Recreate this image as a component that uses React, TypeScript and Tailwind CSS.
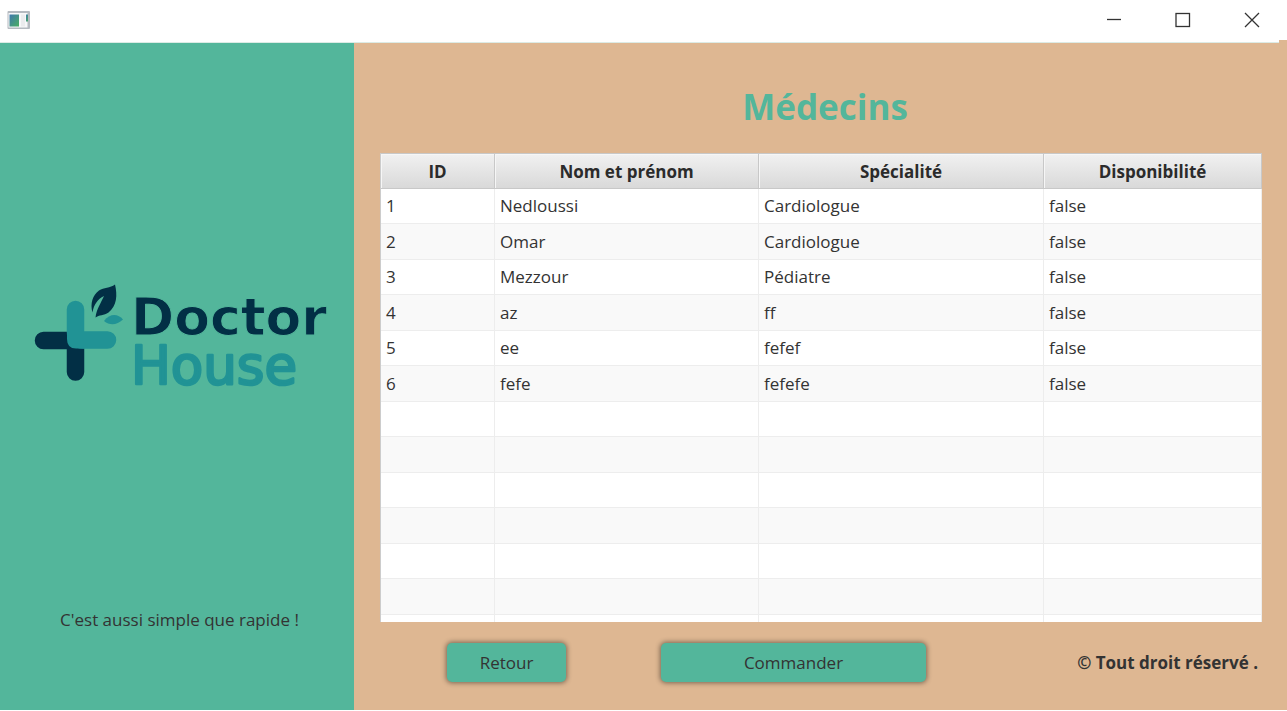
type Doctor = { id: number; name: string; specialty: string; available: boolean };

const doctors: Doctor[] = [
  { id: 1, name: "Nedloussi", specialty: "Cardiologue", available: false },
  { id: 2, name: "Omar", specialty: "Cardiologue", available: false },
  { id: 3, name: "Mezzour", specialty: "Pédiatre", available: false },
  { id: 4, name: "az", specialty: "ff", available: false },
  { id: 5, name: "ee", specialty: "fefef", available: false },
  { id: 6, name: "fefe", specialty: "fefefe", available: false },
];

const ROW_COUNT = 13;
const columns = ["ID", "Nom et prénom", "Spécialité", "Disponibilité"];

function TitleBar() {
  return (
    <header className="relative flex h-[43px] shrink-0 items-center justify-between border-b border-[#dcebe5] bg-white pb-[2px] pl-[7px]">
      <svg width="24" height="20" viewBox="0 0 24 20" aria-hidden="true">
        <defs>
          <linearGradient id="app" x1="0" y1="0" x2="1" y2="1">
            <stop offset="0" stopColor="#3f78ad" />
            <stop offset="1" stopColor="#4aae62" />
          </linearGradient>
        </defs>
        <rect x="0.5" y="1" width="22.5" height="18" rx="1" fill="#b5bac0" />
        <rect x="1.5" y="3" width="19" height="14.5" fill="#f7f8f9" />
        <rect x="2.5" y="4.5" width="9.5" height="12" fill="url(#app)" />
        <rect x="14" y="4.5" width="4" height="12" fill="#ebecee" />
        <rect x="19" y="4.5" width="2" height="7" fill="url(#app)" />
      </svg>
      <div className="flex h-full text-[#333333]">
        <button type="button" aria-label="Réduire" className="flex w-[69px] items-center justify-center">
          <svg width="16" height="16" viewBox="0 0 16 16" fill="none" stroke="currentColor" strokeWidth="1.3">
            <path d="M1 7.5h14" />
          </svg>
        </button>
        <button type="button" aria-label="Agrandir" className="flex w-[69px] items-center justify-center">
          <svg width="16" height="16" viewBox="0 0 16 16" fill="none" stroke="currentColor" strokeWidth="1.3">
            <rect x="1" y="1.5" width="13.5" height="13" />
          </svg>
        </button>
        <button type="button" aria-label="Fermer" className="flex w-[70px] items-center justify-center">
          <svg width="16" height="16" viewBox="0 0 16 16" fill="none" stroke="currentColor" strokeWidth="1.3">
            <path d="M1 1l14 14M15 1L1 15" />
          </svg>
        </button>
      </div>
      <span className="absolute right-0 -bottom-px h-[3px] w-2 bg-[#deb792]" />
    </header>
  );
}

function Logo() {
  return (
    <svg viewBox="0 0 320 130" className="w-[320px]" role="img" aria-label="Doctor House">
      <path d="M23.5 70.5H55M55.5 70V102" stroke="#022f45" strokeWidth="17.5" strokeLinecap="round" fill="none" />
      <path d="M55.5 39.5V62Q55.5 70 63 70H87.5" stroke="#219395" strokeWidth="17.5" strokeLinecap="round" strokeLinejoin="round" fill="none" />
      <path d="M47 60H64V78.5H56Q47 78.5 47 69Z" fill="#219395" />
      <path d="M95 14.5C97.5 25 97 36 88.5 42.5C84 45.5 79 45 75.5 47.5C76.5 39 81 33 84 26C77.5 29.5 74 34 72.5 42.5C70 34 72.5 25 79 20.5C84 17.5 90 18 95 14.5Z" fill="#022f45" />
      <path d="M84 51C90 43 98 43.5 103 49.5C97 55 90 56 84 51Z" fill="#219395" />
      <text className="font-['DejaVu_Sans']" strokeLinejoin="round">
        <tspan x="111" y="65" fontSize="52" fontWeight="700" fill="#022f45" stroke="#53b69b" strokeWidth="1">Doctor</tspan>
        <tspan x="111" y="114" fontSize="53" fill="#219395" stroke="#219395" strokeWidth="2.5">House</tspan>
      </text>
    </svg>
  );
}

function Sidebar() {
  return (
    <aside className="flex w-[354px] shrink-0 flex-col items-center justify-between bg-[#53b69b] pt-[227px] pb-[76px] pl-[5px]">
      <Logo />
      <p className="text-[17px] leading-7 text-[#333333]">C'est aussi simple que rapide !</p>
    </aside>
  );
}

function DoctorTable() {
  return (
    <div className="h-[469px] overflow-hidden border-l border-[#cccccc] bg-white">
      <table className="w-full table-fixed border-separate border-spacing-0 text-left">
        <colgroup>
          <col className="w-[114px]" />
          <col className="w-[264px]" />
          <col className="w-[285px]" />
          <col />
        </colgroup>
        <thead>
          <tr className="h-[36px]">
            {columns.map((title) => (
              <th
                key={title}
                scope="col"
                className="border-t border-r border-b border-[#c8c8c8] bg-linear-to-b from-[#f1f1f1] to-[#d9d9d9] p-0 pt-[2px] text-center text-[17px] leading-6 font-bold text-[#2b2b2b] shadow-[inset_1px_1px_0_#f6f6f6]"
              >
                {title}
              </th>
            ))}
          </tr>
        </thead>
        <tbody>
          {Array.from({ length: ROW_COUNT }, (_, i) => {
            const d = doctors[i];
            const cells = d ? [d.id, d.name, d.specialty, String(d.available)] : ["", "", "", ""];
            return (
              <tr key={i} className="odd:h-[35px] even:h-[36px] odd:bg-white even:bg-[#f9f9f9]">
                {cells.map((value, c) => (
                  <td
                    key={c}
                    className="border-r border-b border-[#ededed] p-0 pl-[5px] text-[17px] leading-6 text-[#333333]"
                  >
                    {value}
                  </td>
                ))}
              </tr>
            );
          })}
        </tbody>
      </table>
    </div>
  );
}

const buttonStyle =
  "h-[39px] rounded-[5px] bg-[#53b69b] text-[17px] leading-6 text-[#333333] shadow-[0_0_5px_1px_rgba(0,0,0,0.45)]";

export default function App() {
  return (
    <div className="flex min-h-screen flex-col bg-white font-['Open_Sans','Noto_Sans',sans-serif]">
      <TitleBar />
      <div className="mb-px flex flex-1">
        <Sidebar />
        <main className="flex min-w-0 flex-1 flex-col bg-[#deb792] pr-[25px] pl-[26px]">
          <h1 className="pt-10 pb-[22px] pl-2 text-center text-[35px] leading-[48px] font-bold text-[#53b69b]">
            Médecins
          </h1>
          <DoctorTable />
          <footer className="flex items-center pt-[21px] pr-1 pl-[67px]">
            <button type="button" className={`${buttonStyle} w-[119px]`}>
              Retour
            </button>
            <button type="button" className={`${buttonStyle} ml-[95px] w-[265px]`}>
              Commander
            </button>
            <p className="ml-auto text-[17px] leading-6 font-bold text-[#333333]">© Tout droit réservé .</p>
          </footer>
        </main>
      </div>
    </div>
  );
}
